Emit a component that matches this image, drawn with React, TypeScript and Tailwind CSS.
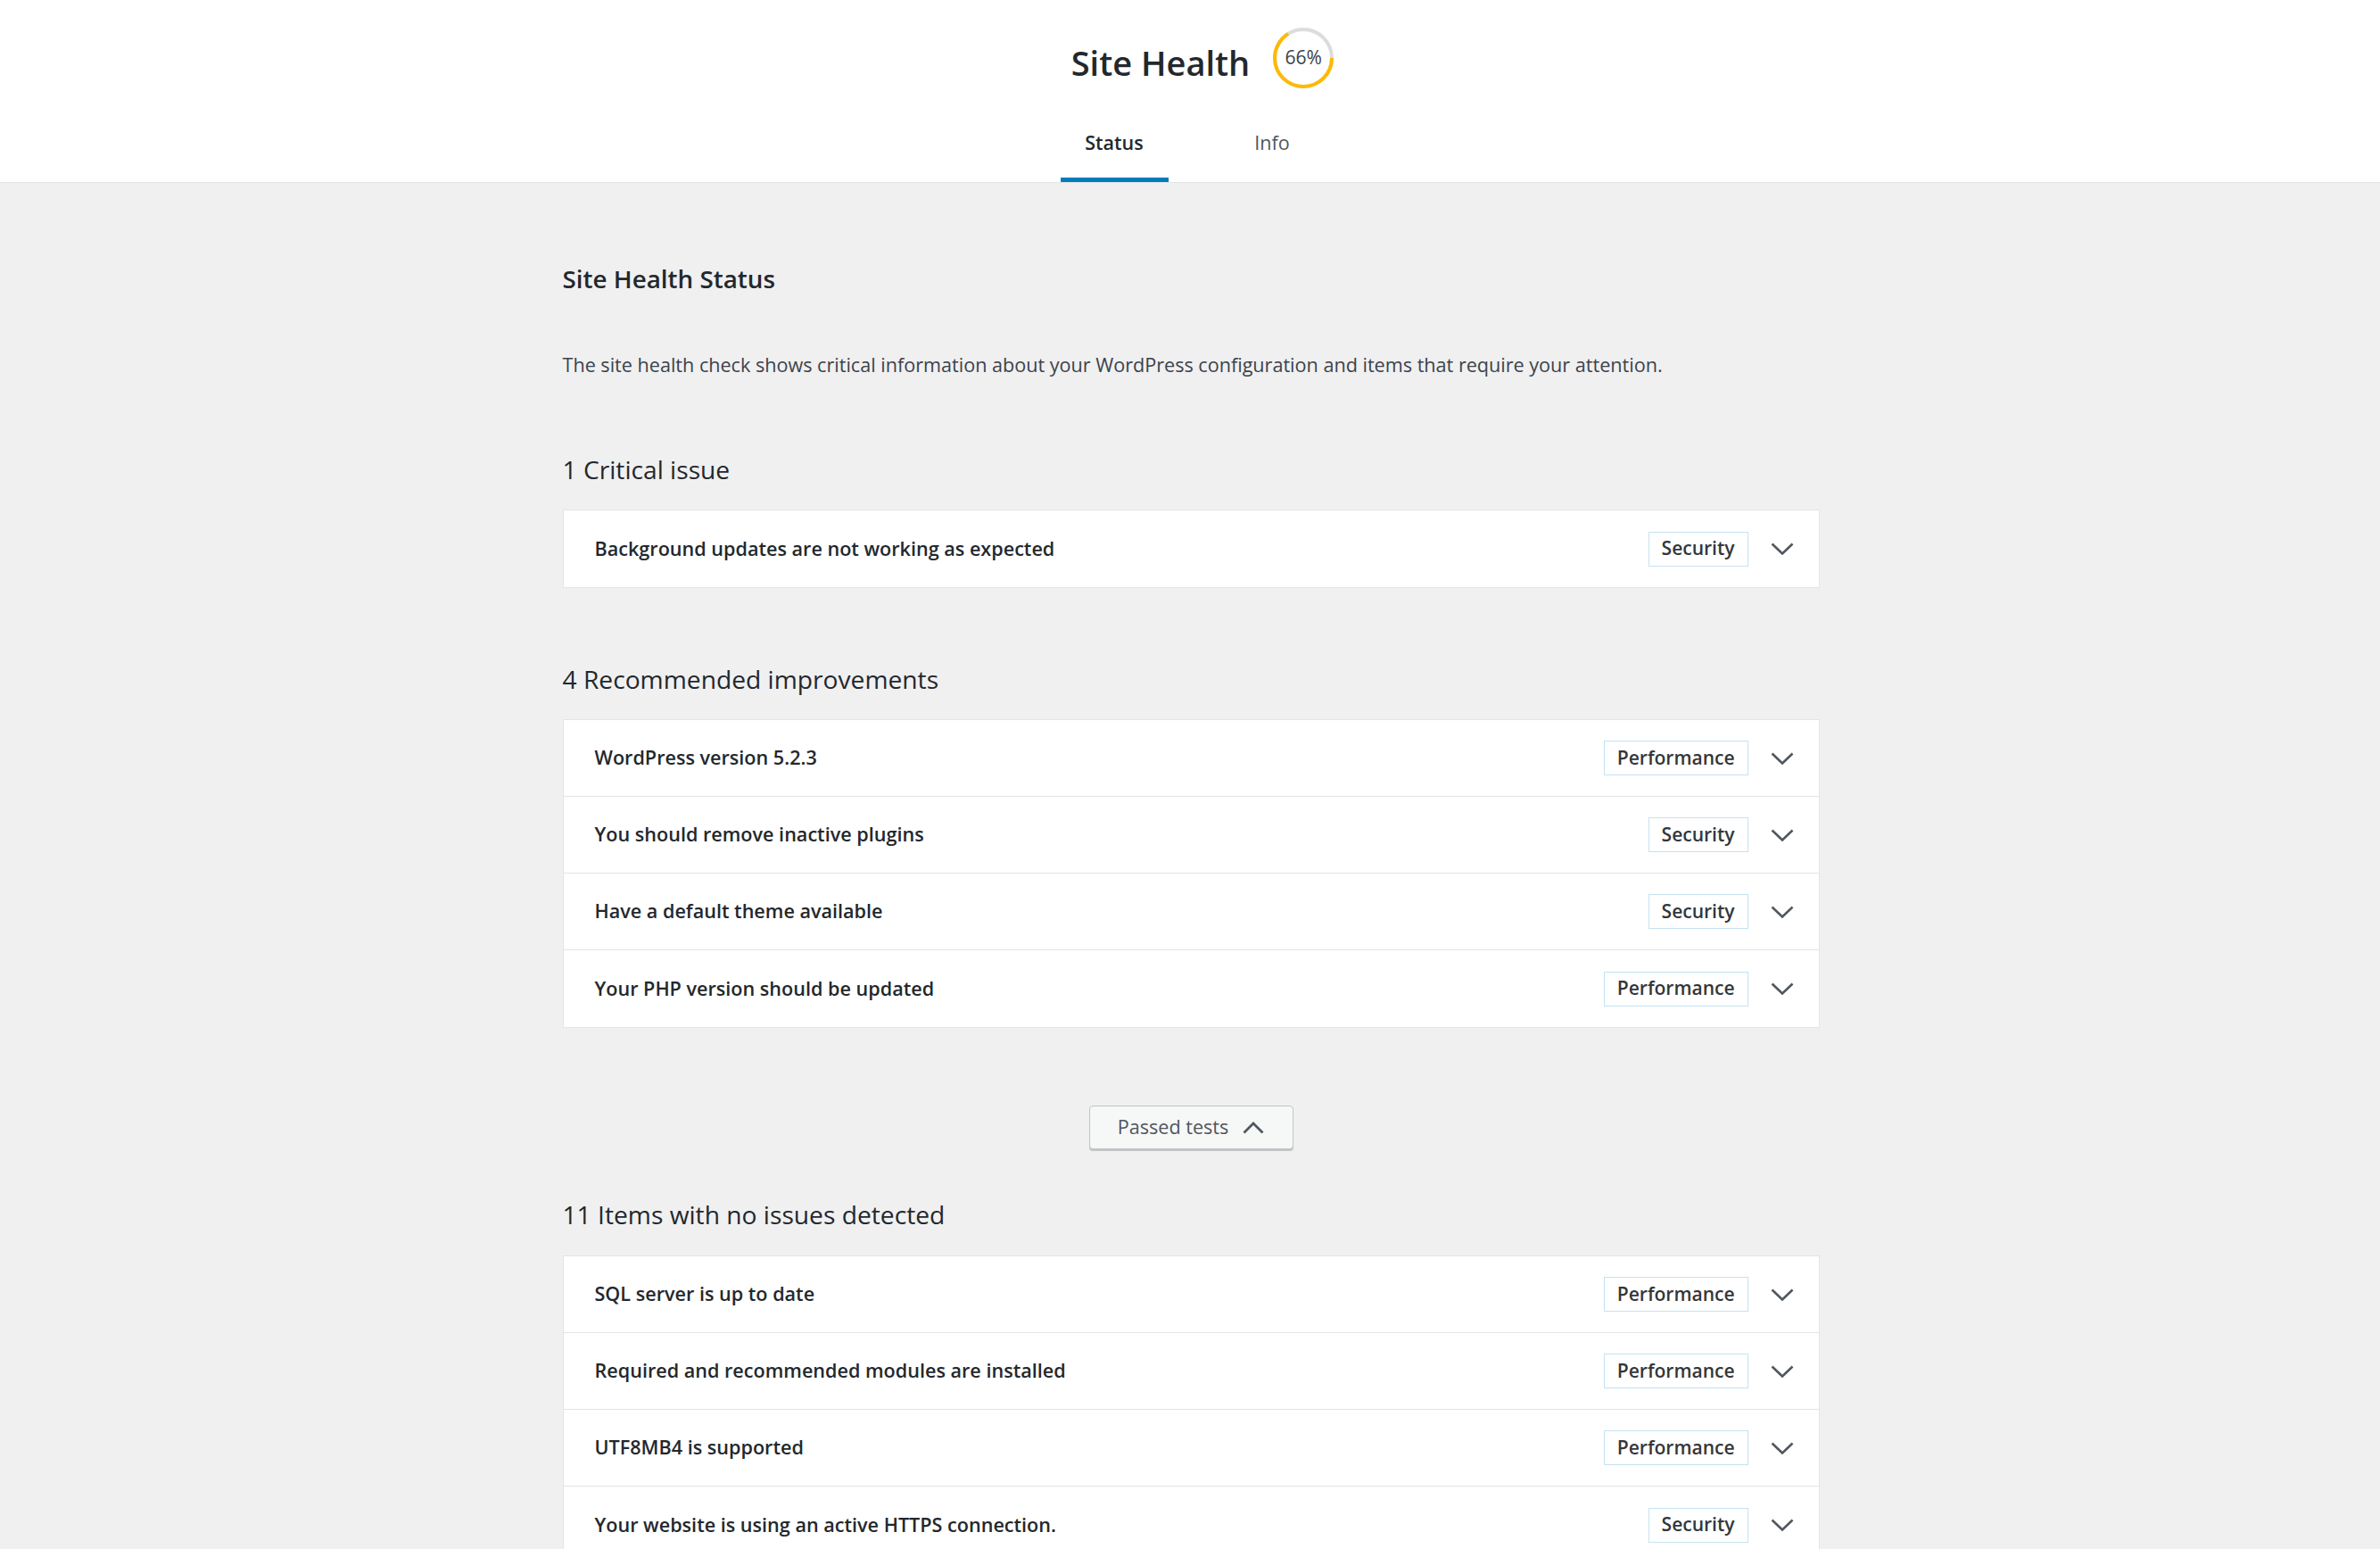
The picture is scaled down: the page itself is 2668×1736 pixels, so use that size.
import React from 'react';

type Item = { title: string; badge: 'Security' | 'Performance' };

const CRITICAL: Item[] = [{ title: 'Background updates are not working as expected', badge: 'Security' }];

const RECOMMENDED: Item[] = [
  { title: 'WordPress version 5.2.3', badge: 'Performance' },
  { title: 'You should remove inactive plugins', badge: 'Security' },
  { title: 'Have a default theme available', badge: 'Security' },
  { title: 'Your PHP version should be updated', badge: 'Performance' },
];

const PASSED: Item[] = [
  { title: 'SQL server is up to date', badge: 'Performance' },
  { title: 'Required and recommended modules are installed', badge: 'Performance' },
  { title: 'UTF8MB4 is supported', badge: 'Performance' },
  { title: 'Your website is using an active HTTPS connection.', badge: 'Security' },
];

const Chevron = () => (
  <svg width="26" height="14" viewBox="0 0 26 14">
    <path d="M1.5 1.5 L13 12.5 L24.5 1.5" fill="none" stroke="#50575e" strokeWidth="2.6" />
  </svg>
);

const ProgressRing = () => {
  const c = 2 * Math.PI * 32;
  return (
    <div className="relative w-[68px] h-[68px]">
      <svg width="68" height="68" viewBox="0 0 68 68">
        <circle cx="34" cy="34" r="32" fill="none" stroke="#dcdcde" strokeWidth="4" />
        <circle
          cx="34"
          cy="34"
          r="32"
          fill="none"
          stroke="#ffb900"
          strokeWidth="4"
          strokeDasharray={`${c * 0.66} ${c}`}
        />
      </svg>
      <span className="absolute inset-0 flex items-center justify-center text-[21px] text-[#3c434a] font-medium">
        66%
      </span>
    </div>
  );
};

const Accordion = ({ items }: { items: Item[] }) => (
  <div className="bg-white border border-[#e2e4e7] divide-y divide-[#e2e4e7]">
    {items.map((item) => (
      <div key={item.title} className="h-[86px] flex items-center pl-[35px] pr-[28px]">
        <span className="flex-1 text-[21.6px] font-semibold text-[#23282d]">{item.title}</span>
        <span className="h-[39px] flex items-center px-[14px] border border-[#c5e2f1] text-[21px] font-semibold text-[#32373c]">
          {item.badge}
        </span>
        <span className="ml-[25px] flex items-center">
          <Chevron />
        </span>
      </div>
    ))}
  </div>
);

const SectionTitle = ({ children, className = '' }: { children: React.ReactNode; className?: string }) => (
  <h3 className={`text-[28.2px] leading-[42px] text-[#23282d] ${className}`}>{children}</h3>
);

export default function App() {
  return (
    <div className="min-h-screen bg-[#f0f0f1] text-[#3c434a]" style={{ fontFamily: '"Open Sans", "Noto Sans", sans-serif' }}>
      <header className="bg-white border-b border-[#e2e4e7] text-center">
        <div className="h-[130px] flex items-center justify-center">
          <h1 className="mt-[10px] ml-[28px] mr-[26px] text-[38px] font-semibold text-[#23282d]">Site Health</h1>
          <ProgressRing />
        </div>
        <nav className="grid grid-cols-[177px_177px] justify-center pl-[7px]">
          <a className="mx-[28px] pt-[14px] pb-[28px] leading-[32px] text-[21.5px] font-semibold text-[#23282d] shadow-[inset_0_-5px_0_#007cba]">
            Status
          </a>
          <a className="mx-[28px] pt-[14px] pb-[28px] leading-[32px] text-[21.5px] text-[#50575e]">Info</a>
        </nav>
      </header>

      <main className="w-[1411px] mx-auto flex flex-col pt-[86px] pl-[2px]">
        <h2 className="text-[27.8px] leading-[42px] font-semibold text-[#23282d]">Site Health Status</h2>
        <p className="mt-[60px] text-[21.6px] leading-[32px]">
          The site health check shows critical information about your WordPress configuration and items that require your attention.
        </p>

        <SectionTitle className="mt-[80px]">1 Critical issue</SectionTitle>
        <div className="mt-[24px]">
          <Accordion items={CRITICAL} />
        </div>

        <SectionTitle className="mt-[81px]">4 Recommended improvements</SectionTitle>
        <div className="mt-[24px]">
          <Accordion items={RECOMMENDED} />
        </div>

        <div className="mt-[87px] flex justify-center">
          <button className="h-[49px] w-[229px] flex items-center justify-center gap-[16px] bg-[#f6f7f7] border border-[#c3c4c7] rounded-[4px] shadow-[0_2px_0_#c3c4c7] text-[21.6px] text-[#50575e]">
            Passed tests
            <svg width="24" height="14" viewBox="0 0 24 14">
              <path d="M1.5 12.5 L12 2 L22.5 12.5" fill="none" stroke="#50575e" strokeWidth="2.8" />
            </svg>
          </button>
        </div>

        <SectionTitle className="mt-[52px]">11 Items with no issues detected</SectionTitle>
        <div className="mt-[25px] pb-[40px]">
          <Accordion items={PASSED} />
        </div>
      </main>
    </div>
  );
}
